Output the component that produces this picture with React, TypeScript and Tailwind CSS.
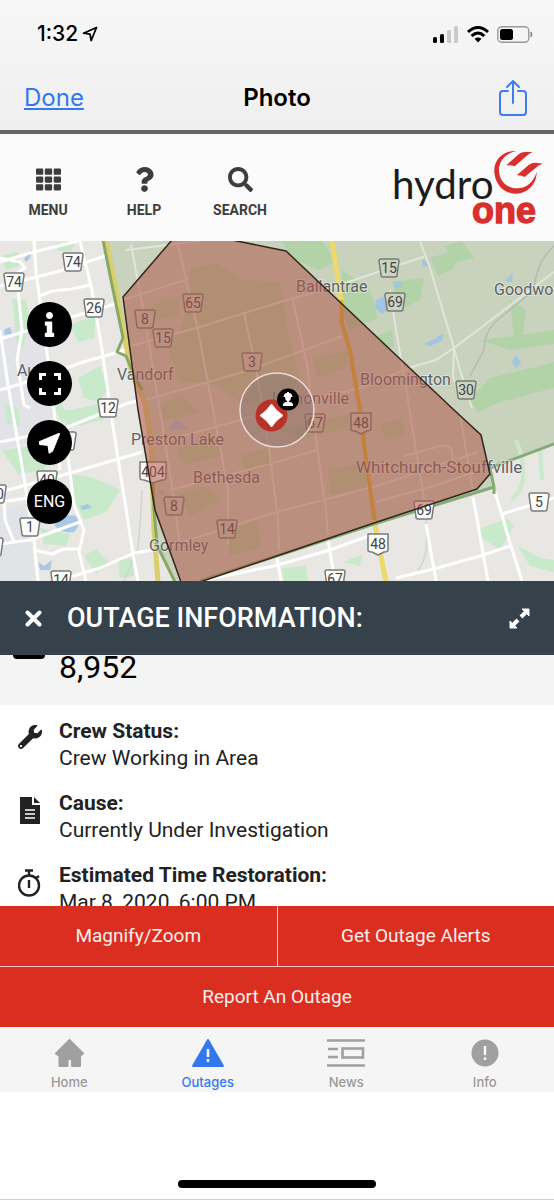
import React from 'react';
import { FaTh, FaSearch, FaWrench, FaQuestion, FaInfo } from 'react-icons/fa';

const WHITE_ROADS = [
  'M0 262 L30 253 L78 241',
  'M0 286 L60 271 L108 255',
  'M0 339 L52 323 L118 303',
  'M40 296 L52 291 L72 289 L90 285',
  'M0 390 L40 378 L80 363 L126 350',
  'M0 442 L60 430 L128 403 L138 401',
  'M0 492 L60 476 L142 452',
  'M0 502 L28 498 L64 484',
  'M0 544 L30 540 L80 522',
  'M0 258 L20 262 L25 268 L12 276',
  'M34 241 L36 272 L52 390 L60 470',
  'M0 330 L8 385 L24 478 L34 540 L38 581',
  'M18 290 L22 330 L17 360 L24 405 L30 408',
  'M80 241 L92 290 L102 350 L112 420 L134 560 L138 581',
  'M66 440 L74 505 L84 530 L79 552 L86 581',
  'M4 500 L5 520 L14 542',
  'M34 550 L52 554 L64 549 L80 549',
  'M70 577 L100 568 L134 553 L160 549',
  'M200 581 L274 566 L330 550 L374 534',
  'M396 578 L430 570 L480 556 L510 546',
  'M328 540 L334 575',
  'M426 524 L436 581',
  'M473 497 L488 581',
  'M495 492 L511 546 L522 581',
  'M502 514 L538 503 L554 498',
  'M277 558 L281 581',
];

const FADED_ROADS = [
  'M126 250 L200 241',
  'M122 300 L160 288 L188 279',
  'M130 346 L200 327 L280 302',
  'M280 302 L330 288 L420 258 L424 257',
  'M146 400 L250 370 L342 336',
  'M160 442 L240 420 L300 402 L360 388 L412 367 L436 360 L454 348 L554 272',
  'M170 490 L274 463 L316 450',
  'M170 546 L270 514 L380 485 L478 452',
  'M376 502 L440 484 L486 468',
  'M404 456 L440 446 Q450 444 452 452 L453 464',
  'M131 244 L145 320 L160 410 L174 500 L180 545',
  'M178 245 L198 330 L215 420 L228 490 L228 545',
  'M244 312 L256 370 L268 440 L278 520 L279 550',
  'M293 300 L307 365 L316 440 L326 510 L328 535',
  'M390 290 L396 330 L402 365 L408 400 L416 450 L426 510',
  'M420 241 L430 268 L454 348 L453 376 L460 400',
  'M454 348 L460 370 L472 408',
  'M460 415 L466 450 L473 492',
];

const GREENS = [
  'M118 252 L140 247 L160 243 L150 268 L128 274Z',
  'M12 299 L26 300 L30 320 L22 350 L17 345Z',
  'M70 325 L96 315 L94 338 L78 342Z',
  'M78 378 L100 366 L108 390 L98 402 L84 398Z',
  'M52 404 L58 398 L66 412 L62 422Z',
  'M2 450 L30 446 L50 456 L44 470 L18 474Z',
  'M70 474 L94 478 L120 490 L106 512 L84 520 L74 500Z',
  'M40 528 L70 534 L66 546 L44 544Z',
  'M84 556 L96 549 L108 562 L96 574Z',
  'M118 560 L132 558 L134 576 L120 578Z',
  'M60 412 L100 404 L104 420 L68 428Z',
  'M0 256 L18 252 L20 266 L6 270Z',
  'M55 243 L76 244 L70 252 L58 251Z',
  'M4 404 L18 408 L20 426 L8 424Z',
  'M282 568 L306 566 L308 581 L284 581Z',
  'M478 530 L508 518 L514 526 L500 550 L482 538Z',
  'M518 546 L540 558 L554 560 L554 572 L530 566Z',
  'M344 562 L362 554 L360 566Z',
];

const FORESTS = [
  'M282 241 L322 241 L336 262 L318 270 L292 258Z',
  'M342 270 L370 290 L378 318 L350 330 L340 306Z',
  'M430 258 L460 248 L454 268 L438 276Z',
  'M392 282 L424 278 L420 300 L400 310Z',
  'M444 246 L462 241 L474 258 L456 262Z',
  'M480 340 L530 334 L554 330 L554 344 L510 350Z',
  'M470 400 L490 378 L514 372 L540 366 L554 362 L554 388 L500 402 L478 412Z',
  'M510 300 L526 310 L522 342 L514 340Z',
  'M378 336 L392 330 L394 346 L384 350Z',
  'M190 270 L216 262 L240 280 L280 282 L288 330 L300 380 L282 410 L240 402 L212 384 L180 382 L168 350 L184 320Z',
  'M150 306 L180 296 L178 316 L152 320Z',
  'M312 360 L350 350 L346 368 L318 378Z',
  'M176 450 L214 436 L222 456 L184 464Z',
  'M328 470 L366 462 L366 490 L330 494Z',
  'M226 530 L258 520 L260 548 L230 556Z',
  'M156 408 L180 396 L200 412 L166 420Z',
  'M280 430 L350 414 L352 426 L300 440Z',
  'M240 456 L268 448 L270 466 L246 472Z',
  'M178 494 L206 486 L220 500 L190 516Z',
  'M380 424 L402 418 L404 434 L386 440Z',
];

const WATER = [
  'M24 259 L32 249 L30 258 L26 262Z',
  'M4 330 L10 327 L12 334 L5 335Z',
  'M80 506 L88 504 L92 508 L82 510Z',
  'M56 518 Q66 514 76 516 Q82 524 74 532 Q62 534 55 526Z',
  'M38 562 L44 566 L52 560 L50 570 L40 570Z',
  'M376 300 L386 296 L390 308 L382 314 L375 308Z',
  'M395 282 L402 281 L401 288 L394 287Z',
  'M422 260 L429 261 L428 267 L423 266Z',
  'M424 344 L436 338 L444 333 L442 341 L430 346Z',
  'M505 281 L513 273 L512 282Z',
  'M512 362 L516 355 L521 362 L516 369Z',
  'M168 430 L176 420 L188 428Z',
  'M158 492 L164 490 L164 496Z',
];

const PLACES = [
  { name: 'Aurora', x: 17, y: 376, size: 16 },
  { name: 'Vandorf', x: 117, y: 380, size: 16 },
  { name: 'Ballantrae', x: 296, y: 292, size: 16 },
  { name: 'Goodwood', x: 494, y: 295, size: 16 },
  { name: 'Bloomington', x: 360, y: 385, size: 16 },
  { name: 'Lemonville', x: 272, y: 404, size: 16 },
  { name: 'Preston Lake', x: 131, y: 445, size: 16 },
  { name: 'Bethesda', x: 193, y: 483, size: 16 },
  { name: 'Whitchurch-Stouffville', x: 356, y: 473, size: 17 },
  { name: 'Gormley', x: 149, y: 551, size: 16 },
];

// muted shields sit inside the greenbelt, where the map is tinted
const SHIELDS = [
  { n: '74', x: 73, y: 262 },
  { n: '74', x: 14, y: 282 },
  { n: '26', x: 94, y: 308 },
  { n: '12', x: 108, y: 408 },
  { n: '9', x: 66, y: 441 },
  { n: '40', x: 47, y: 480 },
  { n: '10', x: -4, y: 494 },
  { n: '1', x: 30, y: 527 },
  { n: '', x: -7, y: 547 },
  { n: '14', x: 61, y: 580 },
  { n: '65', x: 193, y: 303, muted: true },
  { n: '8', x: 145, y: 319, muted: true },
  { n: '15', x: 163, y: 338, muted: true },
  { n: '3', x: 252, y: 362, muted: true },
  { n: '67', x: 315, y: 423, muted: true },
  { n: '8', x: 174, y: 506, muted: true },
  { n: '14', x: 227, y: 529, muted: true },
  { n: '15', x: 389, y: 268, muted: true },
  { n: '69', x: 395, y: 302, muted: true },
  { n: '30', x: 466, y: 390, muted: true },
  { n: '69', x: 424, y: 510 },
  { n: '5', x: 539, y: 502 },
  { n: '67', x: 335, y: 579 },
];

const HIGHWAYS = [
  { n: '404', x: 153, y: 472, w: 13 },
  { n: '48', x: 361, y: 423, w: 10, muted: true },
  { n: '48', x: 378, y: 544, w: 10 },
];

const OUTAGE_AREA =
  'M172 240 L123 297 L138 410 L155 510 L181 582 L200 582 L374 523 L477 489 L490 474 L481 435 L454 410 L286 251 L232 240Z';

function OutageMap() {
  return (
    <svg
      viewBox="0 241 554 340"
      preserveAspectRatio="xMidYMid slice"
      className="block h-full w-full"
      role="img"
      aria-label="Outage map"
    >
      <rect y="241" width="554" height="340" fill="#e9e7e4" />
      <path d="M0 330 L40 320 L60 400 L40 440 L0 450Z M0 510 L26 504 L36 581 L0 581Z" fill="#e2e3e6" />
      {GREENS.map((d) => (
        <path key={d} d={d} fill="#c9e9cb" />
      ))}
      <path
        d="M106 241 L124 330 L142 400 L154 490 L158 550 L175 581 L200 581 L374 524 L494 487 L490 468 L554 444 L554 241Z"
        fill="#c9d2bd"
      />
      {FORESTS.map((d) => (
        <path key={d} d={d} fill="#b1d3a7" />
      ))}
      {WATER.map((d) => (
        <path key={d} d={d} fill="#9cc3e6" opacity="0.85" />
      ))}
      <g fill="none" strokeLinejoin="round">
        <path d="M554 246 Q536 262 534 290 L500 318 Q484 330 484 350 L470 376" stroke="#b4bcb2" strokeWidth="1.5" />
        <path d="M142 490 Q140 530 138 548 L124 581 M426 520 Q430 556 418 570" stroke="#d2d3d5" strokeWidth="1.5" />
        <g stroke="#e0e7d9" strokeWidth="2">
          {FADED_ROADS.map((d) => (
            <path key={d} d={d} />
          ))}
        </g>
        <g stroke="#ffffff" strokeWidth="3">
          {WHITE_ROADS.map((d) => (
            <path key={d} d={d} />
          ))}
        </g>
        <path d="M516 440 Q528 470 520 490 L512 500 M540 450 L542 480" stroke="#c9e9cb" strokeWidth="4" />
        <path d="M106 240 L116 290 L126 345 L132 375 L144 400 Q152 430 152 470 L154 530 L158 582" stroke="#d9cf6c" strokeWidth="5" />
        <path d="M103 240 L112 285 L123 338 L117 352 L126 356 L134 375 L142 390" stroke="#86a968" strokeWidth="3" />
        <path d="M152 470 L154 510 L157 545 L175 582" stroke="#86a968" strokeWidth="3" />
        <path d="M332 240 L341 300 L342 324 L350 350 L360 410 L366 460 L376 530 L386 582" stroke="#deb42d" strokeWidth="4" />
        <path d="M332 240 L341 300 M374 520 L376 530 L386 582" stroke="#eeda6c" strokeWidth="5" />
        <path d="M200 581 L374 524 L494 487 L490 468 L554 444 M494 494 L494 487" stroke="#84ab77" strokeWidth="3" />
      </g>

      <g fontFamily="Roboto, sans-serif" fontSize="14" fill="#3f4347" textAnchor="middle">
        {SHIELDS.map((s) => (
          <g key={`${s.n}-${s.x}-${s.y}`} transform={`translate(${s.x} ${s.y})`}>
            <path
              d="M-8 -9 L8 -9 Q10 -9 10 -7 L8 7 Q8 9 6 9 L-6 9 Q-8 9 -8 7 L-10 -7 Q-10 -9 -8 -9Z"
              fill={s.muted ? '#ccd5c2' : '#fbfbfa'}
              stroke="#777b7a"
              strokeWidth="1.5"
            />
            <text y="5">{s.n}</text>
          </g>
        ))}
        {HIGHWAYS.map((h) => (
          <g key={`${h.n}-${h.y}`} transform={`translate(${h.x} ${h.y})`}>
            <path
              d={`M${-h.w} -10 H${h.w} V6 Q${h.w} 8 ${h.w - 4} 8 L0 11 L${4 - h.w} 8 Q${-h.w} 8 ${-h.w} 6Z`}
              fill={h.muted ? '#ccd5c2' : '#fbfbfa'}
              stroke="#777b7a"
              strokeWidth="1.5"
              strokeLinejoin="round"
            />
            <text y="5">{h.n}</text>
          </g>
        ))}
      </g>
      <g
        fontFamily="Roboto, sans-serif"
        fill="#5f6367"
        stroke="#f2f3ee"
        strokeOpacity="0.5"
        strokeWidth="2"
        paintOrder="stroke"
      >
        {PLACES.map((p) => (
          <text key={p.name} x={p.x} y={p.y} fontSize={p.size}>
            {p.name}
          </text>
        ))}
      </g>

      <path d={OUTAGE_AREA} fill="#af5748" fillOpacity="0.55" stroke="#33261f" strokeWidth="1.5" />

      <circle cx="277" cy="410" r="37" fill="#8a7370" fillOpacity="0.4" stroke="#ecdcd5" strokeWidth="1.5" />
      <circle cx="271.5" cy="415.5" r="16" fill="#b8322a" />
      <path
        d="M271.5 404 Q276 411 283 415.5 Q276 420 271.5 427 Q267 420 260 415.5 Q267 411 271.5 404Z"
        fill="#fff"
        stroke="#fff"
      />
      <circle cx="288" cy="399.5" r="11" fill="#000" />
      <path
        d="M284 396 Q284 393 287 393 L287 392 H289 L289 393 Q292 393 292 396 L293 397 H291 Q291 400 289 401 V402 Q293 402 293 405 V406 H283 V405 Q283 402 287 402 V401 Q285 400 285 397 H283Z"
        fill="#fff"
      />
    </svg>
  );
}

function StatusBar() {
  return (
    <div className="flex h-[68px] items-center justify-between pl-[37px] pr-[21px] font-['Inter',sans-serif]">
      <div className="flex items-center gap-1">
        <span className="text-[21px] font-medium leading-6">1:32</span>
        <svg width="16" height="16" viewBox="0 0 16 16" fill="none" stroke="#000" strokeWidth="1.8" strokeLinejoin="round">
          <path d="M14.5 1.5 L1.5 7.2 L8 8.2 L9.2 14.5Z" />
        </svg>
      </div>
      <div className="flex items-center gap-2">
        <svg width="26" height="17" viewBox="0 0 26 17">
          <rect x="0" y="11" width="4" height="6" rx="1.5" />
          <rect x="7" y="8" width="4" height="9" rx="1.5" />
          <rect x="14" y="4" width="4" height="13" rx="1.5" fill="#c9c9c9" />
          <rect x="21" y="0" width="4" height="17" rx="1.5" fill="#c9c9c9" />
        </svg>
        <svg width="22" height="17" viewBox="0 0 22 17" fill="none" stroke="#000" strokeWidth="3">
          <path d="M1 6 Q11 -3 21 6" />
          <path d="M4.6 10 Q11 4 17.4 10" />
          <path d="M7.5 12.8 Q11 10 14.5 12.8 L11 16.5Z" fill="#000" stroke="none" />
        </svg>
        <svg width="36" height="17" viewBox="0 0 36 17">
          <rect x="0.8" y="0.8" width="31" height="15.4" rx="4" fill="none" stroke="#999" strokeWidth="1.4" />
          <rect x="3" y="3" width="13" height="11" rx="2.5" />
          <path d="M34 6 Q36 8.5 34 11Z" fill="#888" stroke="#888" />
        </svg>
      </div>
    </div>
  );
}

function NavBar() {
  return (
    <div className="grid h-[62px] grid-cols-3 items-center px-6 pb-[2px] font-['Inter',sans-serif] text-[24px] leading-8">
      <a href="#done" className="justify-self-start text-[#3478f0] underline decoration-2 underline-offset-2">
        Done
      </a>
      <h1 className="justify-self-center font-semibold">Photo</h1>
      <button type="button" aria-label="Share" className="justify-self-end pr-[2px]">
        <svg width="30" height="38" viewBox="0 0 30 38" fill="none" stroke="#3f7cf0" strokeWidth="2" strokeLinecap="round" strokeLinejoin="round">
          <path d="M10 12 H5 Q2 12 2 15 V33 Q2 36 5 36 H25 Q28 36 28 33 V15 Q28 12 25 12 H20" />
          <path d="M15 24 V2 M9 8 L15 2 L21 8" />
        </svg>
      </button>
    </div>
  );
}

function HydroOneLogo() {
  return (
    <svg width="157" height="80" viewBox="60 40 471 240" role="img" aria-label="Hydro One">
      <text x="66" y="193" fontFamily="Lato, sans-serif" fontSize="121" fill="#1c1c1c">
        hydro
      </text>
      <text
        x="306"
        y="265"
        fontFamily="Liberation Sans, sans-serif"
        fontWeight="700"
        fontSize="108"
        fill="#d9302f"
        stroke="#d9302f"
        strokeWidth="4"
      >
        one
      </text>
      <g fill="#d9302f">
        <path d="M440 49 C398 46 370 76 373 113 C376 152 404 178 438 177 C474 176 500 148 500 112 C490 144 468 162 440 161 C410 160 388 138 387 108 C386 80 406 56 440 49Z" />
        <path d="M409 92 L446 59 Q454 52 466 52 H488 Q480 55 474 60 L434 95 Q424 90 409 92Z" />
        <path d="M440 122 L476 91 Q485 84 496 84 L519 87 Q510 89 504 94 L464 127 Q454 121 440 122Z" />
      </g>
    </svg>
  );
}

const TOOLS = [
  { label: 'MENU', icon: <FaTh size={25} /> },
  { label: 'HELP', icon: <FaQuestion size={25} /> },
  { label: 'SEARCH', icon: <FaSearch size={25} /> },
];

function Toolbar() {
  return (
    <header className="flex h-[107px] items-center justify-between bg-[#fbfbfb] pr-[7px] text-[#3d3d3d]">
      <nav className="flex pt-3">
        {TOOLS.map((tool) => (
          <button key={tool.label} type="button" className="flex w-24 flex-col items-center gap-2">
            {tool.icon}
            <span className="text-[14px] font-bold leading-5">{tool.label}</span>
          </button>
        ))}
      </nav>
      <HydroOneLogo />
    </header>
  );
}

const MAP_BUTTON = 'flex size-[45px] items-center justify-center rounded-full bg-black text-white';

function MapControls() {
  return (
    <div className="absolute left-[27px] top-[61px] flex flex-col gap-[14px]">
      <button type="button" aria-label="Information" className={MAP_BUTTON}>
        <FaInfo size={25} />
      </button>
      <button type="button" aria-label="Full screen" className={MAP_BUTTON}>
        <svg width="22" height="22" viewBox="0 0 22 22" fill="none" stroke="currentColor" strokeWidth="3">
          <path d="M1.5 7 V1.5 H7 M15 1.5 H20.5 V7 M20.5 15 V20.5 H15 M7 20.5 H1.5 V15" />
        </svg>
      </button>
      <button type="button" aria-label="My location" className={MAP_BUTTON}>
        <svg width="24" height="24" viewBox="0 0 24 24" fill="currentColor" stroke="currentColor" strokeWidth="2" strokeLinejoin="round">
          <path d="M21 3 L2 11 V13 L10.5 14 L11.5 21.5 L14 20Z" />
        </svg>
      </button>
      <button type="button" className={MAP_BUTTON}>
        <span className="text-[16px]">ENG</span>
      </button>
    </div>
  );
}

function DocumentIcon() {
  return (
    <svg width="20" height="27" viewBox="0 0 20 27" fill="currentColor">
      <path d="M0 0 H12 V8 H20 V27 H0Z M14 0 L20 6 H14Z" />
      <path d="M5 13 H15 M5 17 H15 M5 21 H15" stroke="#fff" strokeWidth="1.5" />
    </svg>
  );
}

function TimerIcon() {
  return (
    <svg width="24" height="28" viewBox="0 0 24 28" fill="none" stroke="currentColor" strokeWidth="2.4">
      <circle cx="11" cy="16.5" r="10" />
      <path d="M7 1.5 H15 M11 1 V6 M11 11 V19 M18 9 L21 7" />
    </svg>
  );
}

const DETAILS = [
  { label: 'Crew Status:', value: 'Crew Working in Area', icon: <FaWrench size={24} /> },
  { label: 'Cause:', value: 'Currently Under Investigation', icon: <DocumentIcon /> },
  { label: 'Estimated Time Restoration:', value: 'Mar 8, 2020, 6:00 PM', icon: <TimerIcon /> },
];

function OutagePanel() {
  return (
    <section className="flex h-[325px] flex-col">
      <div className="flex h-[74px] shrink-0 items-center bg-[#35414b] pl-[25px] pr-6 text-white">
        <button type="button" aria-label="Close">
          <svg width="17" height="17" viewBox="0 0 17 17" stroke="currentColor" strokeWidth="4" strokeLinecap="round">
            <path d="M2.5 2.5 L14.5 14.5 M14.5 2.5 L2.5 14.5" />
          </svg>
        </button>
        <h2 className="ml-[25px] flex-1 text-[27px] font-medium leading-8">OUTAGE INFORMATION:</h2>
        <button type="button" aria-label="Expand">
          <svg width="21" height="21" viewBox="0 0 21 21" fill="currentColor" stroke="currentColor">
            <path d="M13 1 H20 V8Z M1 13 V20 H8Z" strokeLinejoin="round" />
            <path d="M17 4 L12 9 M9 12 L4 17" strokeWidth="4" />
          </svg>
        </button>
      </div>
      <div className="min-h-0 flex-1 overflow-hidden">
        <div className="flex h-[50px] items-start bg-[#f4f4f4] pl-[13px]">
          <span className="h-1 w-8 rounded-b-sm bg-black" />
          <span className="ml-[14px] text-[32px] leading-6 text-black">8,952</span>
        </div>
        <dl className="flex flex-col gap-[18px] pt-[13px] text-[21px] leading-[27px] text-[#222]">
          {DETAILS.map((item) => (
            <div key={item.label} className="grid grid-cols-[59px_1fr]">
              <div className="row-span-2 flex justify-center pt-[7px]">{item.icon}</div>
              <dt className="font-bold">{item.label}</dt>
              <dd>{item.value}</dd>
            </div>
          ))}
        </dl>
      </div>
    </section>
  );
}

function Actions() {
  return (
    <div className="grid grid-cols-2 gap-px bg-[#f6c9c5] text-[19px] text-[#fdeeec]">
      <button type="button" className="h-[60px] bg-[#d92e20]">
        Magnify/Zoom
      </button>
      <button type="button" className="h-[60px] bg-[#d92e20]">
        Get Outage Alerts
      </button>
      <button type="button" className="col-span-2 h-[60px] bg-[#d92e20]">
        Report An Outage
      </button>
    </div>
  );
}

function TabBar() {
  return (
    <nav className="grid h-[65px] grid-cols-4 bg-[#f5f5f5] pt-3 font-['Inter',sans-serif] text-[13px] font-medium leading-4 text-[#999]">
      <a href="#home" className="flex flex-col items-center gap-[7px]">
        <svg width="29" height="28" viewBox="0 0 29 28" fill="#a0a0a0" stroke="#a0a0a0" strokeWidth="2" strokeLinejoin="round">
          <path d="M14.5 1 L28 14.5 L26 16 H25 V27 H17 V20 H12.5 V27 H4.5 V16 H3 L1 14.5Z" />
        </svg>
        Home
      </a>
      <a href="#outages" className="flex flex-col items-center gap-[7px] text-[#3478f0]">
        <svg width="32" height="28" viewBox="0 0 32 28">
          <path d="M16 1 L31 27 H1Z" fill="currentColor" stroke="currentColor" strokeWidth="2" strokeLinejoin="round" />
          <path d="M16 10 V18 M16 20 V23" stroke="#fff" strokeWidth="2.5" />
        </svg>
        Outages
      </a>
      <a href="#news" className="flex flex-col items-center gap-[7px]">
        <svg width="38" height="28" viewBox="0 0 38 28" fill="none" stroke="#a0a0a0" strokeWidth="2.6">
          <path d="M0 1.5 H38 M1 10 H11 M1 18 H11 M0 26.5 H38" />
          <rect x="15.5" y="9.5" width="20.5" height="9" />
        </svg>
        News
      </a>
      <a href="#info" className="flex flex-col items-center gap-[7px]">
        <svg width="28" height="28" viewBox="0 0 28 28">
          <circle cx="14" cy="14" r="13.5" fill="#a0a0a0" />
          <path d="M14 7 V16 M14 18.5 V21" stroke="#fff" strokeWidth="2.4" />
        </svg>
        Info
      </a>
    </nav>
  );
}

export default function App() {
  return (
    <div className="flex min-h-screen flex-col bg-white font-['Roboto',sans-serif] text-black">
      <div className="border-b-4 border-[#666] bg-linear-to-b from-[#f7f7f7] to-[#efefef]">
        <StatusBar />
        <NavBar />
      </div>
      <Toolbar />
      <main className="relative h-[340px] overflow-hidden">
        <OutageMap />
        <MapControls />
      </main>
      <OutagePanel />
      <Actions />
      <TabBar />
      <div className="flex flex-1 items-end justify-center border-b border-[#d0d0d0] pb-[11px]">
        <div className="h-2 w-[198px] rounded-full bg-black" />
      </div>
    </div>
  );
}
